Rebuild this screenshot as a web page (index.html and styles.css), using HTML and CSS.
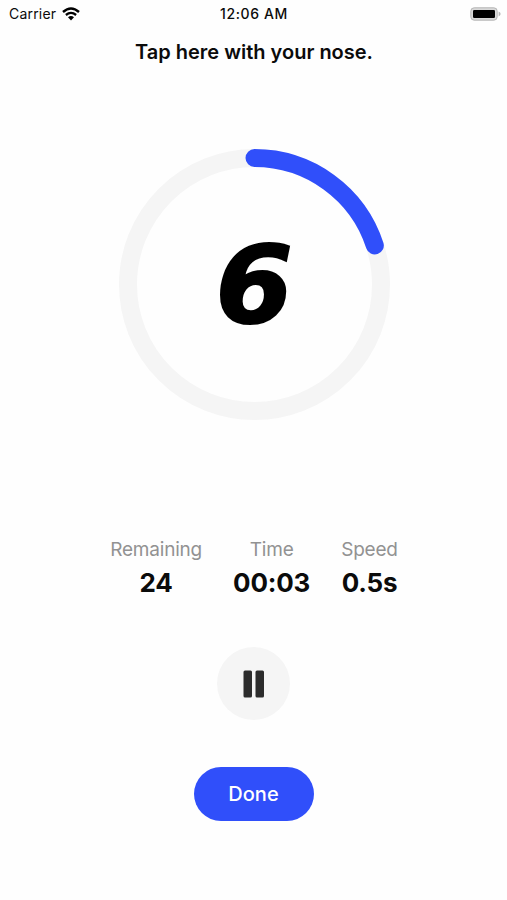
FILE: index.html
```html
<!DOCTYPE html>
<html lang="en">
<head>
    <meta charset="UTF-8">
    <meta name="viewport" content="width=device-width, initial-scale=1.0">
    <title>Nose Tap</title>
    <link rel="stylesheet" href="styles.css">
</head>
<body>
    <div class="status-bar">
        <div class="carrier">
            <span>Carrier</span>
            <svg class="wifi" width="18" height="14" viewBox="0 0 18 14">
                <path d="M1 5 Q9 -2 17 5" fill="none" stroke="#000" stroke-width="2.4"/>
                <path d="M3.9 8 Q9 3.8 14.1 8" fill="none" stroke="#000" stroke-width="2.3"/>
                <path d="M6 10.2 Q9 7.8 12 10.2 L9 13.4 Z" fill="#000"/>
            </svg>
        </div>
        <div class="clock">12:06 AM</div>
        <div class="battery">
            <svg width="31" height="14" viewBox="0 0 31 14">
                <rect x="0.8" y="0.8" width="26.4" height="12.4" rx="3.4" fill="#d8d8d8" stroke="#b5b5b5"/>
                <rect x="3" y="3" width="22" height="8" rx="1.2" fill="#000"/>
                <path d="M28.6 4.6 Q30.6 5.5 30.6 7 Q30.6 8.5 28.6 9.4 Z" fill="#b5b5b5"/>
            </svg>
        </div>
    </div>

    <h1 class="title">Tap here with your nose.</h1>

    <div class="counter">
        <svg class="ring" width="271" height="271" viewBox="0 0 271 271">
            <circle class="track" cx="135.5" cy="135.5" r="126.5"/>
            <circle class="progress" cx="135.5" cy="135.5" r="126.5" pathLength="100" transform="rotate(-90 135.5 135.5)"/>
        </svg>
        <span class="count">6</span>
    </div>

    <div class="stats">
        <div class="stat">
            <div class="label">Remaining</div>
            <div class="value">24</div>
        </div>
        <div class="stat">
            <div class="label">Time</div>
            <div class="value">00:03</div>
        </div>
        <div class="stat">
            <div class="label">Speed</div>
            <div class="value">0.5s</div>
        </div>
    </div>

    <button type="button" class="pause-btn" aria-label="Pause">
        <svg width="22" height="28" viewBox="0 0 22 28">
            <rect x="0.5" y="0.5" width="8.5" height="27" rx="1.5" fill="#2c2c2c"/>
            <rect x="12.5" y="0.5" width="8.5" height="27" rx="1.5" fill="#2c2c2c"/>
        </svg>
    </button>
    <button type="button" class="done-btn">Done</button>
</body>
</html>
```
FILE: styles.css
```css
body {
    font-family: Inter, "Liberation Sans", sans-serif;
    background-color: #fefefe;
    color: #0b0b0b;
    display: flex;
    flex-direction: column;
    align-items: center;
    height: 900px;
    margin: 0;
}
.status-bar {
    width: 100%;
    height: 27px;
    padding: 0 6px 0 9px;
    box-sizing: border-box;
    display: grid;
    grid-template-columns: 1fr auto 1fr;
    align-items: center;
    font-size: 14px;
}
.carrier {
    display: flex;
    align-items: center;
    gap: 6px;
    letter-spacing: 0.2px;
}
.clock {
    font-weight: 550;
    letter-spacing: 0.6px;
    padding-right: 2px;
}
.battery {
    display: flex;
    justify-content: flex-end;
}
.title {
    margin: 12px 0 0 1px;
    font-size: 20px;
    line-height: 26px;
    font-weight: 600;
}
.counter {
    display: grid;
    place-items: center;
    width: 271px;
    height: 271px;
    margin: 84px 0 0 1px;
}
.ring,
.count {
    grid-area: 1 / 1;
}
.track {
    fill: none;
    stroke: #f5f5f5;
    stroke-width: 18;
}
.progress {
    fill: none;
    stroke: #304ffa;
    stroke-width: 18;
    stroke-linecap: round;
    stroke-dasharray: 20 80;
}
.count {
    font-family: "DejaVu Sans", sans-serif;
    font-size: 107px;
    line-height: 112px;
    font-weight: 700;
    font-style: italic;
    color: #000;
    -webkit-text-stroke: 2px #000;
    transform: scaleX(1.04);
}
.stats {
    display: flex;
    gap: 31px;
    margin: 117px 0 0 1px;
    text-align: center;
}
.label {
    font-size: 19px;
    line-height: 26px;
    letter-spacing: -0.2px;
    color: #929292;
}
.value {
    font-size: 26px;
    line-height: 32px;
    margin-top: 4px;
    font-weight: 700;
    letter-spacing: -0.2px;
}
.pause-btn {
    display: flex;
    justify-content: center;
    align-items: center;
    width: 73px;
    height: 73px;
    padding: 0;
    margin-top: 48px;
    border: none;
    border-radius: 50%;
    background-color: #f5f5f5;
}
.done-btn {
    width: 120px;
    height: 54px;
    padding: 0;
    margin-top: 47px;
    border: none;
    border-radius: 27px;
    background-color: #304ffa;
    color: #fff;
    font-family: inherit;
    font-size: 20px;
    font-weight: 550;
}
```
